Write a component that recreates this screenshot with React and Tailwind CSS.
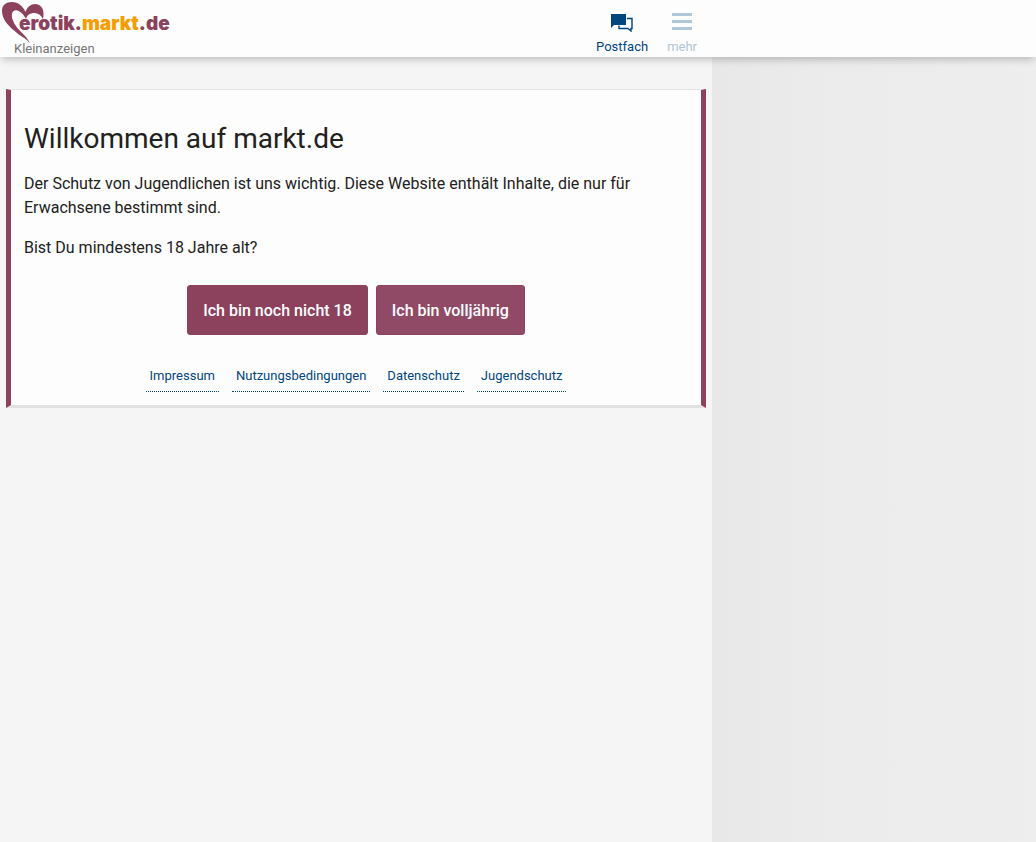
import React from 'react';

const footerLinks = ['Impressum', 'Nutzungsbedingungen', 'Datenschutz', 'Jugendschutz'];

const HeartIcon = () => (
  <svg viewBox="0 0 44 44" className="absolute left-0 top-0 h-11 w-11" fill="#8c415d" aria-hidden="true">
    <path d="M30 43.5C27 39 22 37 17 33C8 26 2 19 2 11C2 5 6 2 12 2C18 2 23 6 25.5 12C27 7 31 4 35 4C40 4 43.5 8 43.5 13C43.5 15 43.5 17 43 19C41 15 38 13 34.5 13C30 13 27 15 26 19C23 13 18 9 14.5 10.5C10.5 12 11 19 16 26C20 32 27 36 30 43.5Z" />
  </svg>
);

const MailboxIcon = () => (
  <svg viewBox="0 0 24 20" className="h-5 w-6" aria-hidden="true">
    <path d="M1 2h15v11H4l-3 3z" fill="#00467f" />
    <path d="M17 6.5h5v10h-1v2.5l-3-2.5h-9v-3" fill="none" stroke="#00467f" strokeWidth="1.4" />
  </svg>
);

const MenuIcon = () => (
  <svg viewBox="0 0 20 20" className="h-5 w-5" fill="#b0c6d9" aria-hidden="true">
    <rect x="0" y="1" width="20" height="3" rx="0.5" />
    <rect x="0" y="8" width="20" height="3" rx="0.5" />
    <rect x="0" y="15" width="20" height="3" rx="0.5" />
  </svg>
);

const Header = () => (
  <header className="relative z-10 h-[57px] bg-[#fdfdfd] shadow-[0_4px_8px_-2px_rgba(0,0,0,0.25)]">
    <div className="flex max-w-[712px] justify-between">
      <a href="#" className="relative block h-[57px] w-[180px]">
        <HeartIcon />
        <span className="relative block pl-[19px] pt-3 font-['Inter'] text-[19px] leading-6 font-black text-[#8c415d]">
          erotik.<span className="text-[#f59c00]">markt</span>.de
        </span>
        <span className="relative block pl-[14px] pt-1 text-[13px] leading-[18px] text-[#757575]">Kleinanzeigen</span>
      </a>
      <nav className="flex gap-[19px] pr-[15px] pt-3 text-[13px] leading-4">
        <a href="#" className="flex flex-col items-center gap-[7px] text-[#00467f]">
          <MailboxIcon />
          Postfach
        </a>
        <button className="flex flex-col items-center gap-[7px] text-[#b0c6d9]">
          <MenuIcon />
          mehr
        </button>
      </nav>
    </div>
  </header>
);

export default function App() {
  return (
    <div className="flex min-h-screen flex-col bg-[#f5f5f5] font-['Roboto',sans-serif] text-[#212121]">
      <Header />
      <div className="flex flex-1">
        <main className="w-full max-w-[712px] px-[6px] pt-8">
          <section className="border-x-[5px] border-t border-b-[3px] border-x-[#8c415d] border-y-[#e2e2e2] bg-[#fdfdfd] px-[13px] pt-[33px] pb-[13px]">
            <h1 className="mb-[17px] text-[28px] leading-8">Willkommen auf markt.de</h1>
            <p className="mb-4 leading-6">
              Der Schutz von Jugendlichen ist uns wichtig. Diese Website enthält Inhalte, die nur für Erwachsene
              bestimmt sind.
            </p>
            <p className="leading-6">Bist Du mindestens 18 Jahre alt?</p>
            <div className="mt-[25px] flex flex-wrap justify-center gap-2 font-medium text-white">
              <button className="h-[50px] rounded-[3px] border border-[#8c415d] bg-[#8c415d] px-[15px] pt-px">
                Ich bin noch nicht 18
              </button>
              <button className="h-[50px] rounded-[3px] border border-[#8c415d] bg-[#914a65] px-[15px] pt-px">
                Ich bin volljährig
              </button>
            </div>
            <div className="mt-[25px] flex flex-wrap justify-center gap-[13px] text-[13px] leading-[31px]">
              {footerLinks.map((label) => (
                <a key={label} href="#" className="border-b border-dotted border-[#00467f] px-1 text-[#00467f]">
                  {label}
                </a>
              ))}
            </div>
          </section>
        </main>
        <aside className="flex-1 bg-linear-to-r from-[#e8e8e8] via-[#ebebeb] via-30% to-[#eeeeee]"></aside>
      </div>
    </div>
  );
}
